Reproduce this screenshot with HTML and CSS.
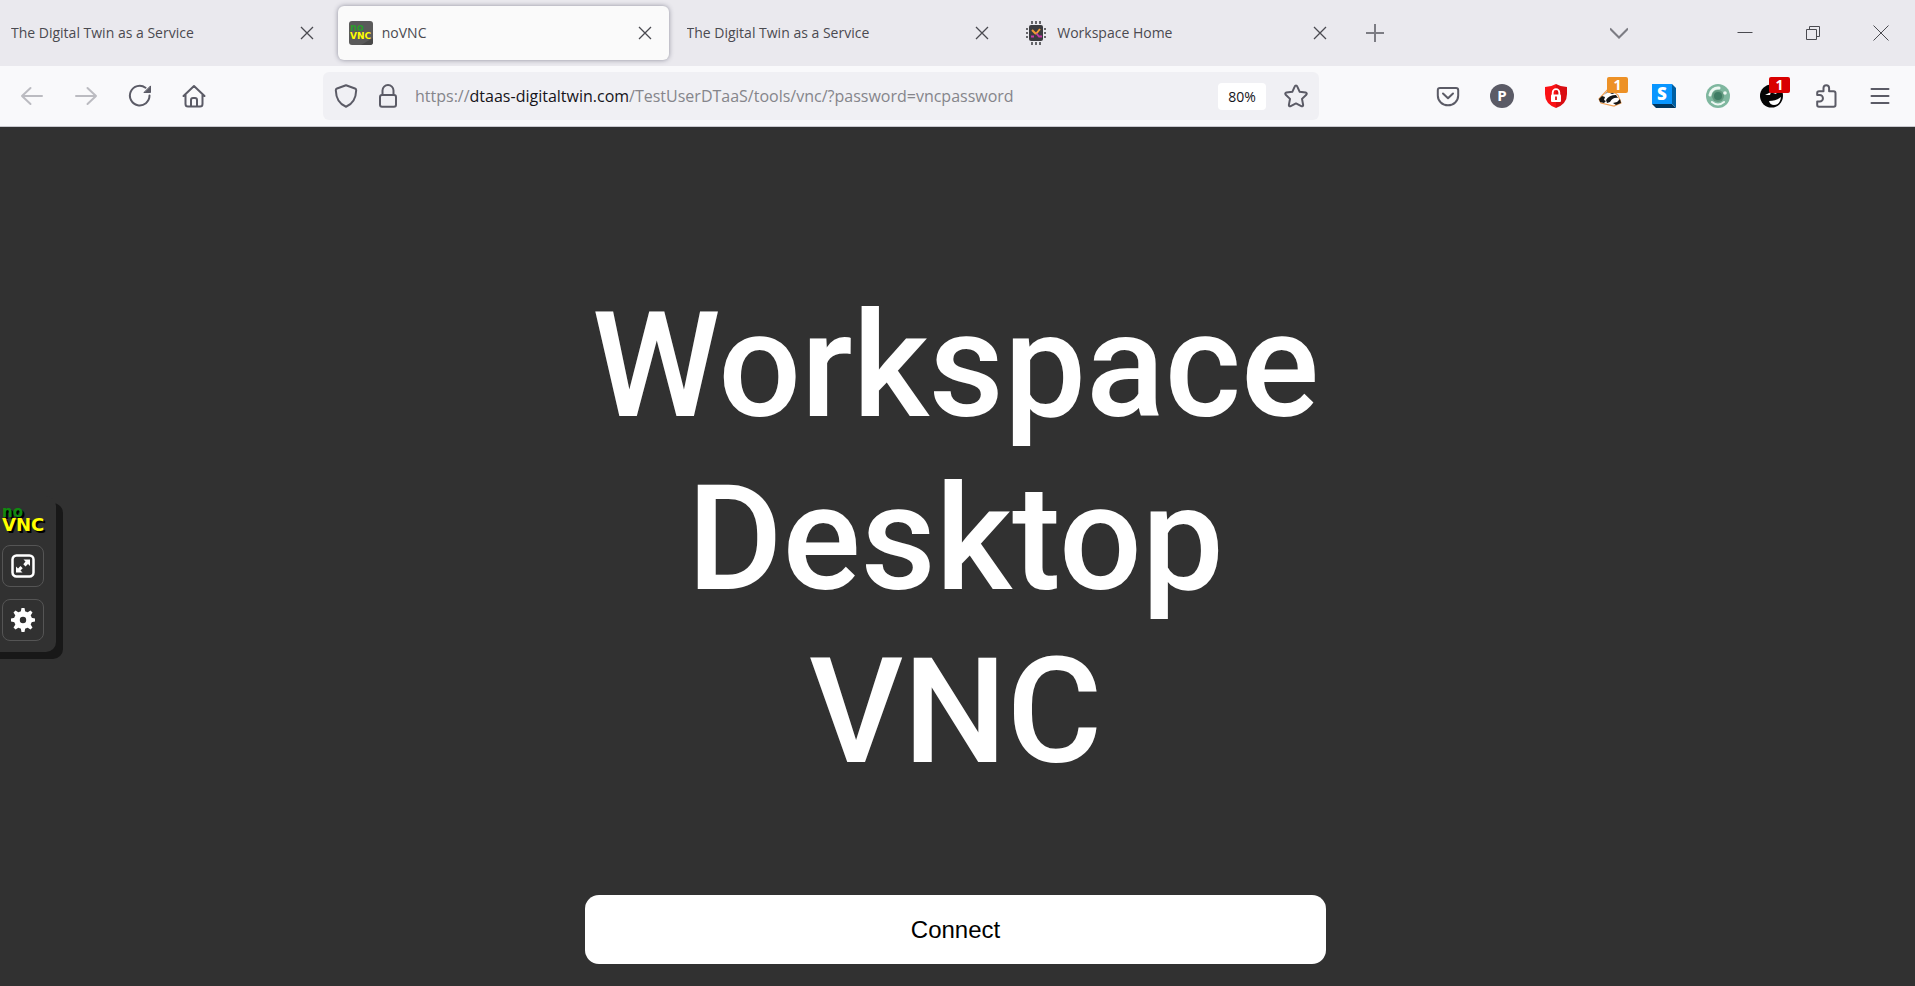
FILE: index.html
```html
<!DOCTYPE html>
<html lang="en">
<head>
<meta charset="utf-8">
<title>noVNC</title>
<link rel="stylesheet" href="styles.css">
</head>
<body>
<svg class="defs" aria-hidden="true">
  <symbol id="close" viewBox="0 0 14 14"><path d="M1 1l12 12M13 1L1 13"/></symbol>
</svg>
<header class="chrome">
  <div class="tabbar">
    <div class="tabs" role="tablist">
      <div class="tab">
        <span class="tab-title" role="tab">The Digital Twin as a Service</span>
        <button class="tab-close" aria-label="Close tab"><svg class="line"><use href="#close"/></svg></button>
      </div>
      <div class="tab tab-active">
        <span class="favicon"><svg viewBox="0 0 24 24">
          <rect width="24" height="24" rx="3" fill="#5a5a5a"/><path d="M24 17v4a3 3 0 0 1-3 3h-9z" fill="#494949"/>
          <text class="logo-no" x="1" y="10" font-size="10">no</text><text class="logo-vnc" x="1" y="18" font-size="9">VNC</text>
        </svg></span>
        <span class="tab-title" role="tab" aria-selected="true">noVNC</span>
        <button class="tab-close" aria-label="Close tab"><svg class="line"><use href="#close"/></svg></button>
      </div>
      <div class="tab">
        <span class="tab-title" role="tab">The Digital Twin as a Service</span>
        <button class="tab-close" aria-label="Close tab"><svg class="line"><use href="#close"/></svg></button>
      </div>
      <div class="tab">
        <span class="favicon"><svg viewBox="0 0 24 24">
          <path d="M8 0v3M12 0v3M16 0v3M8 21v3M12 21v3M16 21v3M2 8h2M2 12h2M2 16h2M20 8h2M20 12h2M20 16h2" stroke="#3b3b3f" stroke-width="1.500"/>
          <rect x="5" y="4" width="14" height="16" rx="2" fill="#3b3b3f"/>
          <path d="M8 9l4 4M16 8l-4 5" fill="none" stroke="#f49a35" stroke-width="2"/>
          <path d="M12.500 12.500l2.500 3h3M7 15.500h3" fill="none" stroke="#c538a5" stroke-width="1.800"/>
        </svg></span>
        <span class="tab-title" role="tab">Workspace Home</span>
        <button class="tab-close" aria-label="Close tab"><svg class="line"><use href="#close"/></svg></button>
      </div>
    </div>
    <button class="new-tab" aria-label="New tab"><svg class="line" viewBox="0 0 18 18"><path d="M9 0v18M0 9h18"/></svg></button>
    <button class="all-tabs" aria-label="List all tabs"><svg class="line" viewBox="0 0 18 18"><path d="M0 4.500l9 9 9-9"/></svg></button>
    <div class="window-controls">
      <button aria-label="Minimize"><svg class="line" viewBox="0 0 16 16"><path d="M.500 7.500h15"/></svg></button>
      <button aria-label="Restore"><svg class="line" viewBox="0 0 16 16"><path d="M1.500 4.500h10v10h-10zM4.500 4.500v-3h10v10h-3"/></svg></button>
      <button aria-label="Close window"><svg class="line" viewBox="0 0 16 16"><path d="M.500.500l15 15M15.500.500l-15 15"/></svg></button>
    </div>
  </div>

  <div class="navbar">
    <nav class="nav-buttons" aria-label="Navigation">
      <button aria-label="Back" disabled><svg class="stroke" viewBox="0 0 24 24"><path d="M22 12H2M10.500 4L2 12l8.500 8"/></svg></button>
      <button aria-label="Forward" disabled><svg class="stroke" viewBox="0 0 24 24"><path d="M2 12h20M13.500 4l8.500 8-8.500 8"/></svg></button>
      <button aria-label="Reload"><svg class="stroke" viewBox="0 0 24 24"><path d="M21.500 11.500a9.800 9.800 0 1 1-4-7.800"/><path class="solid" d="M22.500 2.300v6.200h-6.200z"/></svg></button>
      <button aria-label="Home"><svg class="stroke" viewBox="0 0 24 24"><path d="M1.500 12L12 2l10.500 10M3.500 10.500V20q0 2.500 2.500 2.500h12q2.500 0 2.500-2.500v-9.500M9 22.500V16q0-2 2-2h2q2 0 2 2v6.500"/></svg></button>
    </nav>
    <div class="urlbar">
      <button class="shield" aria-label="Tracking protection"><svg class="stroke" viewBox="0 0 24 24"><path d="M12 1.200l9 3.300q1.200.5 1.200 1.800C22 13 19 20 12 22.800 5 20 2 13 1.800 6.300q0-1.300 1.200-1.800z"/></svg></button>
      <button aria-label="Site information"><svg class="stroke" viewBox="0 0 24 24"><path d="M6.500 11V6.500a5.500 5.500 0 0 1 11 0V11"/><rect x="4" y="11" width="16" height="11.800" rx="2"/></svg></button>
      <div class="url" role="textbox" aria-label="Address" contenteditable="true" spellcheck="false">https://<span class="host">dtaas-digitaltwin.com</span>/TestUserDTaaS/tools/vnc/?password=vncpassword</div>
      <button class="zoom-level">80%</button>
      <button aria-label="Bookmark"><svg class="stroke" viewBox="0 0 24 24"><path d="M12 1.500c.6 0 1 .4 1.200.9l2.500 5.400 5.900.8c1.100.2 1.500 1.300.7 2.100l-4.300 4.200 1.100 5.900c.2 1.200-.8 1.800-1.800 1.300L12 19.400l-5.300 2.700c-1 .5-2-.1-1.800-1.300L6 14.900l-4.300-4.200c-.8-.8-.4-1.900.7-2.100l5.900-.8 2.500-5.400c.2-.5.600-.9 1.200-.9z"/></svg></button>
    </div>
    <div class="extensions">
      <button aria-label="Pocket"><svg class="stroke" viewBox="0 0 24 24"><path d="M4 4h16q2.200 0 2.200 2.200V11.500a10.200 9.800 0 0 1-20.400 0V6.200Q1.800 4 4 4zM7 9.500l5 4.800 5-4.800"/></svg></button>
      <button aria-label="Profile"><svg viewBox="0 0 24 24"><circle cx="12" cy="12" r="12" fill="#5b5b66"/><text class="mark" x="12" y="17" font-size="15">P</text></svg></button>
      <button aria-label="Content blocker"><svg viewBox="0 0 24 24"><path d="M12 0q5 3 11 3v7q0 10-11 14z" fill="#d90d12"/><path d="M12 0Q7 3 1 3v7q0 10 11 14z" fill="#fb1115"/><path d="M8.700 11V8.500a3.300 3.300 0 0 1 6.600 0V11" fill="none" stroke="#fff" stroke-width="1.800"/><rect x="7" y="10.500" width="10" height="7.500" rx="1" fill="#fff"/><path d="M12 12.500v3.500" stroke="#e01015" stroke-width="1.800"/></svg></button>
      <button aria-label="Privacy Badger"><svg viewBox="0 0 24 24"><path d="M1 15L11 4l9 7 3 8-7 3-13-3z" fill="#fff" stroke="#f0a055" stroke-width="1.200"/><path d="M1 15l3-3 3 1-1 3 2 1-2 2-4-1zM6 11l6-6 5 4-3 1-4-2zM8 16q3-5 10-5l2 3q-5-1-8 4l-3 1zM15 19l4-1 3-3 1 4-5 2z" fill="#151515"/></svg><span class="badge badge-orange">1</span></button>
      <button aria-label="Stylus"><svg viewBox="0 0 24 24"><path d="M0 20h20l4 4H4z" fill="#00365e"/><path d="M20 0l4 4v20l-4-4z" fill="#0060a3"/><path d="M0 0h20v20H0z" fill="#0996ff"/><text class="mark heavy" x="10" y="16" font-size="17">S</text></svg></button>
      <button aria-label="Privacy monitor"><svg viewBox="0 0 24 24"><circle cx="12" cy="12" r="12" fill="#7fb79f"/><circle cx="12" cy="12" r="6" fill="#62987f"/><circle cx="12" cy="12" r="4" fill="#3f7c64"/><g fill="none" stroke="#edf7f2" stroke-linecap="round"><path d="M4 11a8 8 0 0 1 9-7" stroke-width="3"/><path d="M6 18q6 5 12 0" stroke-width="2"/></g><circle cx="19" cy="9" r="1.800" fill="#edf7f2"/></svg></button>
      <button aria-label="Ghost mode"><svg viewBox="0 0 24 24"><circle cx="11.500" cy="12" r="11.500" fill="#050505"/><path d="M9 17q7 0 12-4-1 8-7 8-4 0-5-4zM5 11l6-3-1 3zM13 9l5-2-2 3z" fill="#fff"/></svg><span class="badge badge-red">1</span></button>
      <button aria-label="Extensions"><svg class="stroke" viewBox="0 0 24 24"><path d="M5 22.800q-1.800 0-1.800-1.800v-3.500h2.500a3 3 0 0 0 0-6.500H3.200V9q0-1.800 1.800-1.800h4.500V4a2.800 2.800 0 0 1 5.600 0v3.200H19.500q2 0 2 2V21q0 1.800-1.800 1.800z"/></svg></button>
      <button aria-label="Menu"><svg class="stroke" viewBox="0 0 24 24"><path d="M3.500 5h17M3.500 12h17M3.500 19h17"/></svg></button>
    </div>
  </div>
</header>

<main class="viewport">
  <aside class="control-bar" aria-label="noVNC controls">
    <div class="brand"><span class="brand-top logo-no">no</span><span class="brand-base logo-vnc">VNC</span></div>
    <button class="tool" aria-label="Fullscreen"><svg viewBox="0 0 24 24"><rect x="1.500" y="1.500" width="21" height="21" rx="4" fill="none" stroke="#fff" stroke-width="2.500"/><path d="M12.500 5.500H19V12l-2-2-2.500 2.500-2.200-2.200L14.500 7.500zM5 12.500l2 2 2.500-2.500 2.200 2.200-2.200 2.300 2 2H5z" fill="#fff"/></svg></button>
    <button class="tool" aria-label="Settings"><svg viewBox="0 0 24 24"><g fill="#fff"><path fill-rule="evenodd" d="M12 3a9 9 0 1 1 0 18 9 9 0 0 1 0-18zm0 5.800a3.200 3.200 0 1 0 0 6.400 3.200 3.200 0 0 0 0-6.400z"/><path d="M10.500 0h3l1 5h-5zM10.500 24h3l1-5h-5zM0 10.500v3l5 1v-5zM24 10.500v3l-5 1v-5zM2.500 4.500l2-2 4 2.500L5 8.500zM19.500 2.500l2 2L19 8.500 15.500 5zM21.500 19.500l-2 2-4-2.500 3.500-3.500zM4.500 21.500l-2-2L5 15.500 8.500 19z"/></g></svg></button>
  </aside>
  <section class="welcome">
    <h1 class="headline">Workspace<br>Desktop<br>VNC</h1>
    <button class="connect">Connect</button>
  </section>
</main>
</body>
</html>
```
FILE: styles.css
```css
* { box-sizing: border-box; }
body {
  margin: 0;
  min-height: 100vh;
  display: flex;
  flex-direction: column;
  background: #313131;
  font-family: "Open Sans", "Noto Sans", sans-serif;
}
button {
  position: relative;
  display: grid;
  place-items: center;
  flex: none;
  margin: 0;
  padding: 0;
  border: 0;
  background: none;
  color: inherit;
  font: inherit;
}
svg { display: block; width: 24px; height: 24px; }
.defs { position: absolute; width: 0; height: 0; }
.line { fill: none; stroke: currentColor; stroke-width: 1.3; }
.stroke { fill: none; stroke: currentColor; stroke-width: 2; stroke-linecap: round; stroke-linejoin: round; }
.solid { fill: currentColor; stroke-width: 1; }

.tabbar {
  display: flex;
  align-items: center;
  height: 66px;
  background: #eae9ee;
  color: #4a4a50;
}
.tabs { display: flex; gap: 7px; flex: 0 1 1344px; min-width: 0; }
.tab {
  display: flex;
  flex: 1 1 0;
  align-items: center;
  gap: 9px;
  min-width: 0;
  height: 54px;
  padding: 0 12px 0 11px;
  border-radius: 6px;
}
.tab-active { background: #fafafa; box-shadow: 0 0 5px #8f8f9d; }
.tab-title { flex: 1; overflow: hidden; white-space: nowrap; font-size: 14px; line-height: 24px; }
.tab-close { width: 24px; height: 24px; }
.tab-close svg { width: 14px; height: 14px; }
.new-tab { width: 48px; height: 48px; margin-left: 7px; color: #7c7c83; }
.new-tab svg, .all-tabs svg { width: 18px; height: 18px; }
.all-tabs { width: 48px; height: 48px; margin-left: auto; margin-right: 68px; color: #7c7c83; }
.new-tab .line, .all-tabs .line { stroke-width: 2; }
.window-controls { display: flex; }
.window-controls button { width: 68px; height: 48px; }
.window-controls svg { width: 16px; height: 16px; }
.window-controls .line { stroke-width: 1; }

.navbar {
  display: flex;
  align-items: center;
  height: 61px;
  border-bottom: 1px solid #c9c9cf;
  background: #f9f9fb;
  color: #5b5b66;
}
.nav-buttons { display: flex; gap: 6px; padding-left: 8px; }
.nav-buttons button, .extensions button { width: 48px; height: 48px; }
.nav-buttons button:disabled { color: #bbbbc1; }
.urlbar {
  display: flex;
  flex: 0 1 996px;
  align-items: center;
  min-width: 0;
  height: 48px;
  margin-left: 105px;
  padding: 0 11px;
  gap: 15px;
  border-radius: 6px;
  background: #f0f0f4;
}
.shield, .zoom-level { margin-right: 3px; }
.url {
  flex: 1;
  min-width: 0;
  overflow: hidden;
  white-space: nowrap;
  color: #85858b;
  font-size: 16px;
  line-height: 32px;
}
.host { color: #15141a; }
.zoom-level { width: 48px; height: 27px; border-radius: 4px; background: #fff; color: #15141a; font-size: 14px; }
.extensions { display: flex; gap: 6px; margin-left: auto; padding-right: 11px; }
.badge {
  position: absolute;
  top: 5px;
  right: 6px;
  width: 21px;
  border-radius: 2px;
  color: #fff;
  font-size: 14px;
  font-weight: 700;
  line-height: 16px;
  text-align: center;
}
.badge-orange { background: #ed9126; }
.badge-red { background: #d90000; }
.mark { fill: #fff; font-family: "Open Sans", sans-serif; font-weight: 700; text-anchor: middle; }
.heavy { font-weight: 800; }

.logo-no, .logo-vnc { font-family: "DejaVu Sans", sans-serif; font-weight: 700; }
.logo-no { fill: #2c9a2c; color: #0f8a0f; }
.logo-vnc { fill: #ff0; color: #ff0; }

.viewport { position: relative; flex: 1; padding-right: 4px; }
.control-bar {
  position: absolute;
  top: 369px;
  left: 0;
  display: flex;
  flex-direction: column;
  gap: 12px;
  padding: 11px 12px 11px 2px;
  border-radius: 0 10px 10px 0;
  background: #313131;
  box-shadow: 7px 7px 0 #181818, 0 7px 0 #181818;
}
.brand {
  display: flex;
  flex-direction: column;
  width: 42px;
  height: 26px;
  text-shadow: 2px 2px 0 #000;
}
.brand-top { font-size: 15px; line-height: 10px; }
.brand-base { font-size: 18px; line-height: 16px; }
.tool { width: 42px; height: 42px; border: 1px solid #555; border-radius: 8px; }
.welcome {
  display: flex;
  flex-direction: column;
  align-items: center;
  gap: 96px;
  width: 100%;
  max-width: 741px;
  margin: 0 auto;
  padding: 153px 0 22px;
}
.headline {
  margin: 0;
  color: #fff;
  font-family: Roboto, sans-serif;
  font-size: 146px;
  font-weight: 500;
  line-height: 173px;
  text-align: center;
}
.connect {
  width: 100%;
  height: 69px;
  border-radius: 14px;
  background: #fff;
  color: #000;
  font-family: "Liberation Sans", Arial, sans-serif;
  font-size: 24px;
}
```
